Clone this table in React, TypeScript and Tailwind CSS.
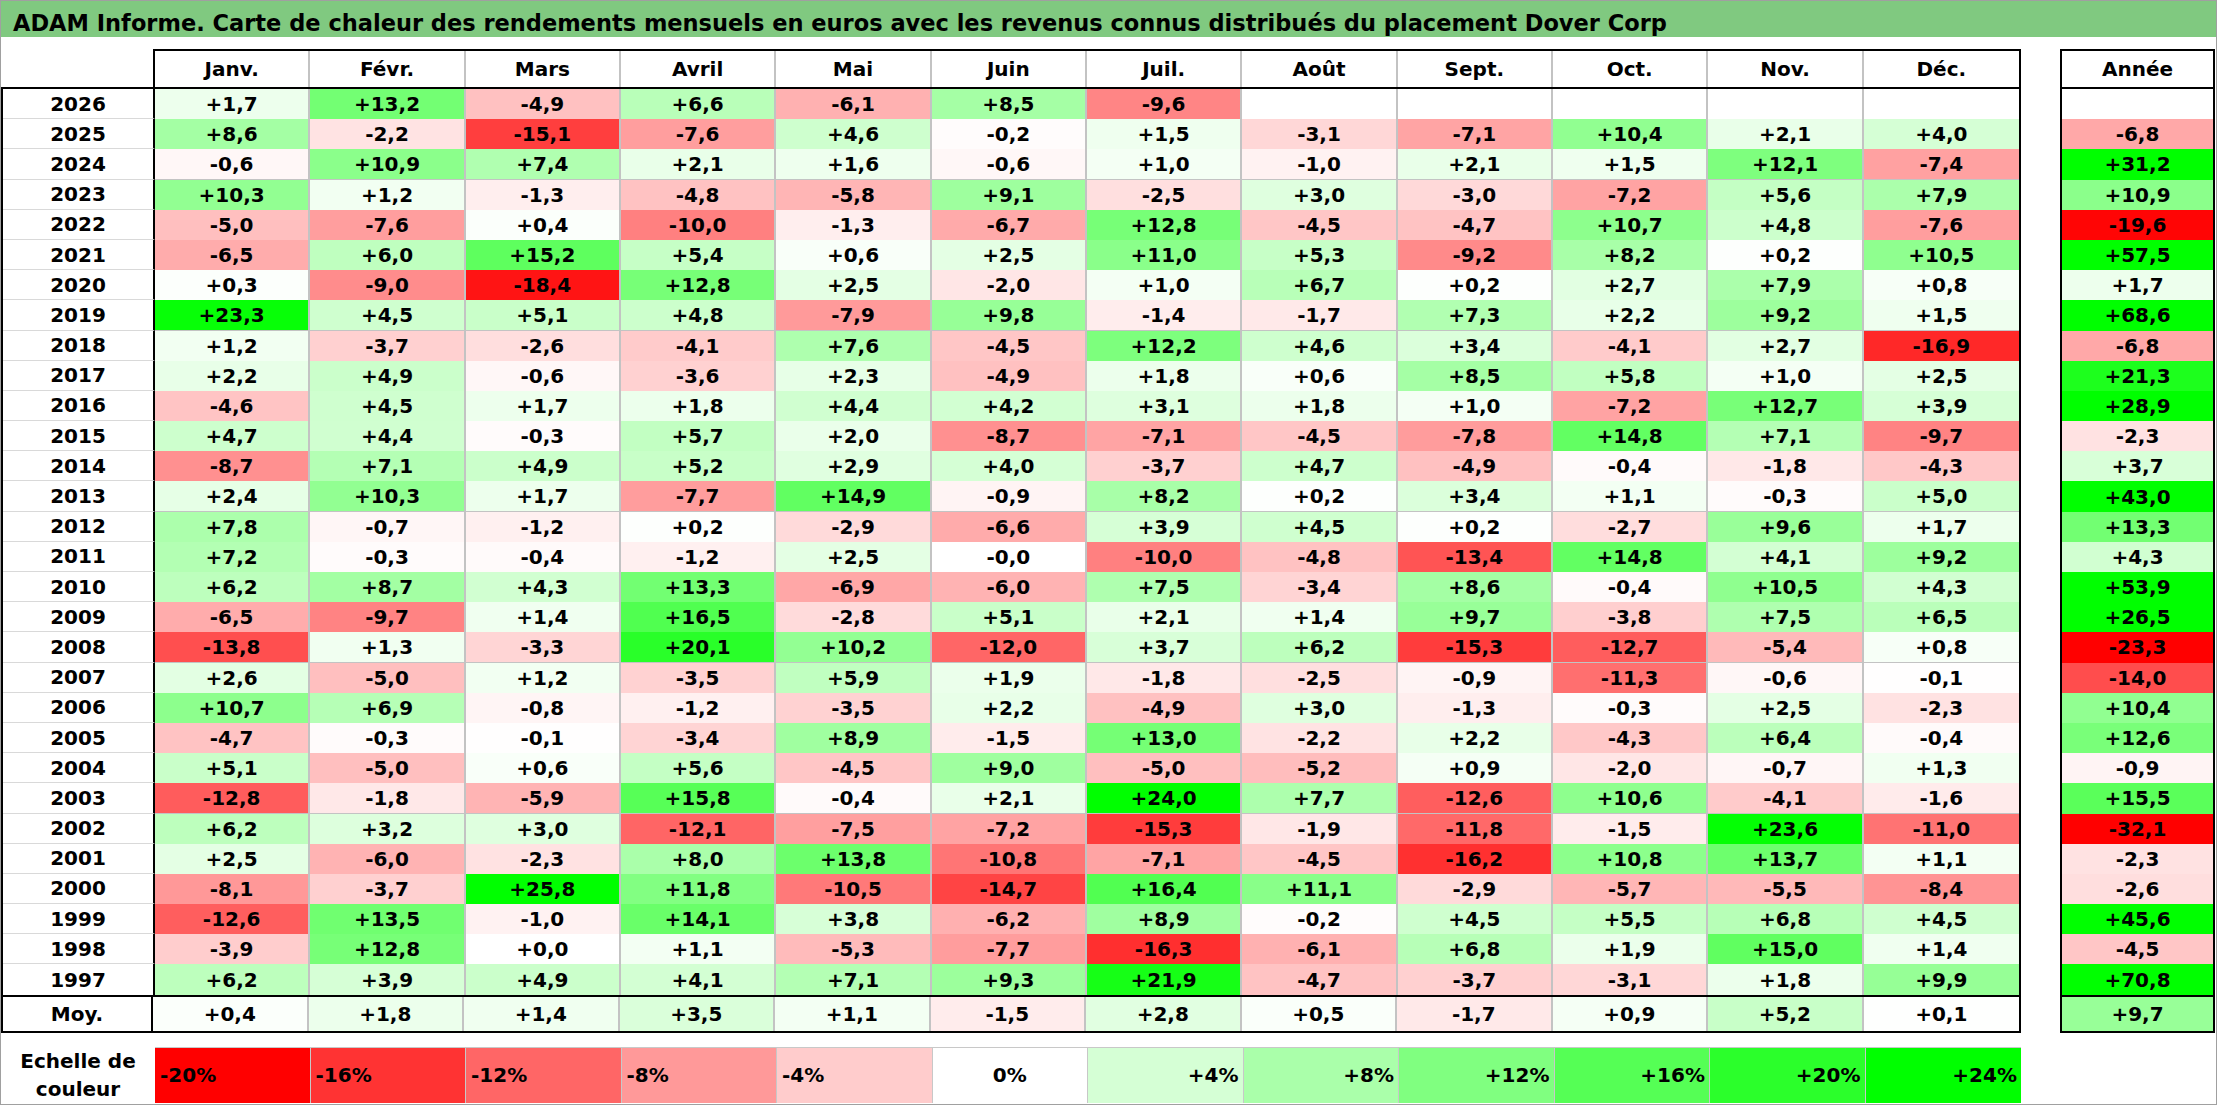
import React from "react";

const MONTHS = ["Janv.", "Févr.", "Mars", "Avril", "Mai", "Juin", "Juil.", "Août", "Sept.", "Oct.", "Nov.", "Déc."];

// year, monthly returns (Janv..Déc), yearly total
const DATA: [string, string[], string][] = [
  ["2026", ["+1,7", "+13,2", "-4,9", "+6,6", "-6,1", "+8,5", "-9,6", "", "", "", "", ""], ""],
  ["2025", ["+8,6", "-2,2", "-15,1", "-7,6", "+4,6", "-0,2", "+1,5", "-3,1", "-7,1", "+10,4", "+2,1", "+4,0"], "-6,8"],
  ["2024", ["-0,6", "+10,9", "+7,4", "+2,1", "+1,6", "-0,6", "+1,0", "-1,0", "+2,1", "+1,5", "+12,1", "-7,4"], "+31,2"],
  ["2023", ["+10,3", "+1,2", "-1,3", "-4,8", "-5,8", "+9,1", "-2,5", "+3,0", "-3,0", "-7,2", "+5,6", "+7,9"], "+10,9"],
  ["2022", ["-5,0", "-7,6", "+0,4", "-10,0", "-1,3", "-6,7", "+12,8", "-4,5", "-4,7", "+10,7", "+4,8", "-7,6"], "-19,6"],
  ["2021", ["-6,5", "+6,0", "+15,2", "+5,4", "+0,6", "+2,5", "+11,0", "+5,3", "-9,2", "+8,2", "+0,2", "+10,5"], "+57,5"],
  ["2020", ["+0,3", "-9,0", "-18,4", "+12,8", "+2,5", "-2,0", "+1,0", "+6,7", "+0,2", "+2,7", "+7,9", "+0,8"], "+1,7"],
  ["2019", ["+23,3", "+4,5", "+5,1", "+4,8", "-7,9", "+9,8", "-1,4", "-1,7", "+7,3", "+2,2", "+9,2", "+1,5"], "+68,6"],
  ["2018", ["+1,2", "-3,7", "-2,6", "-4,1", "+7,6", "-4,5", "+12,2", "+4,6", "+3,4", "-4,1", "+2,7", "-16,9"], "-6,8"],
  ["2017", ["+2,2", "+4,9", "-0,6", "-3,6", "+2,3", "-4,9", "+1,8", "+0,6", "+8,5", "+5,8", "+1,0", "+2,5"], "+21,3"],
  ["2016", ["-4,6", "+4,5", "+1,7", "+1,8", "+4,4", "+4,2", "+3,1", "+1,8", "+1,0", "-7,2", "+12,7", "+3,9"], "+28,9"],
  ["2015", ["+4,7", "+4,4", "-0,3", "+5,7", "+2,0", "-8,7", "-7,1", "-4,5", "-7,8", "+14,8", "+7,1", "-9,7"], "-2,3"],
  ["2014", ["-8,7", "+7,1", "+4,9", "+5,2", "+2,9", "+4,0", "-3,7", "+4,7", "-4,9", "-0,4", "-1,8", "-4,3"], "+3,7"],
  ["2013", ["+2,4", "+10,3", "+1,7", "-7,7", "+14,9", "-0,9", "+8,2", "+0,2", "+3,4", "+1,1", "-0,3", "+5,0"], "+43,0"],
  ["2012", ["+7,8", "-0,7", "-1,2", "+0,2", "-2,9", "-6,6", "+3,9", "+4,5", "+0,2", "-2,7", "+9,6", "+1,7"], "+13,3"],
  ["2011", ["+7,2", "-0,3", "-0,4", "-1,2", "+2,5", "-0,0", "-10,0", "-4,8", "-13,4", "+14,8", "+4,1", "+9,2"], "+4,3"],
  ["2010", ["+6,2", "+8,7", "+4,3", "+13,3", "-6,9", "-6,0", "+7,5", "-3,4", "+8,6", "-0,4", "+10,5", "+4,3"], "+53,9"],
  ["2009", ["-6,5", "-9,7", "+1,4", "+16,5", "-2,8", "+5,1", "+2,1", "+1,4", "+9,7", "-3,8", "+7,5", "+6,5"], "+26,5"],
  ["2008", ["-13,8", "+1,3", "-3,3", "+20,1", "+10,2", "-12,0", "+3,7", "+6,2", "-15,3", "-12,7", "-5,4", "+0,8"], "-23,3"],
  ["2007", ["+2,6", "-5,0", "+1,2", "-3,5", "+5,9", "+1,9", "-1,8", "-2,5", "-0,9", "-11,3", "-0,6", "-0,1"], "-14,0"],
  ["2006", ["+10,7", "+6,9", "-0,8", "-1,2", "-3,5", "+2,2", "-4,9", "+3,0", "-1,3", "-0,3", "+2,5", "-2,3"], "+10,4"],
  ["2005", ["-4,7", "-0,3", "-0,1", "-3,4", "+8,9", "-1,5", "+13,0", "-2,2", "+2,2", "-4,3", "+6,4", "-0,4"], "+12,6"],
  ["2004", ["+5,1", "-5,0", "+0,6", "+5,6", "-4,5", "+9,0", "-5,0", "-5,2", "+0,9", "-2,0", "-0,7", "+1,3"], "-0,9"],
  ["2003", ["-12,8", "-1,8", "-5,9", "+15,8", "-0,4", "+2,1", "+24,0", "+7,7", "-12,6", "+10,6", "-4,1", "-1,6"], "+15,5"],
  ["2002", ["+6,2", "+3,2", "+3,0", "-12,1", "-7,5", "-7,2", "-15,3", "-1,9", "-11,8", "-1,5", "+23,6", "-11,0"], "-32,1"],
  ["2001", ["+2,5", "-6,0", "-2,3", "+8,0", "+13,8", "-10,8", "-7,1", "-4,5", "-16,2", "+10,8", "+13,7", "+1,1"], "-2,3"],
  ["2000", ["-8,1", "-3,7", "+25,8", "+11,8", "-10,5", "-14,7", "+16,4", "+11,1", "-2,9", "-5,7", "-5,5", "-8,4"], "-2,6"],
  ["1999", ["-12,6", "+13,5", "-1,0", "+14,1", "+3,8", "-6,2", "+8,9", "-0,2", "+4,5", "+5,5", "+6,8", "+4,5"], "+45,6"],
  ["1998", ["-3,9", "+12,8", "+0,0", "+1,1", "-5,3", "-7,7", "-16,3", "-6,1", "+6,8", "+1,9", "+15,0", "+1,4"], "-4,5"],
  ["1997", ["+6,2", "+3,9", "+4,9", "+4,1", "+7,1", "+9,3", "+21,9", "-4,7", "-3,7", "-3,1", "+1,8", "+9,9"], "+70,8"],
];

const AVG = ["+0,4", "+1,8", "+1,4", "+3,5", "+1,1", "-1,5", "+2,8", "+0,5", "-1,7", "+0,9", "+5,2", "+0,1"];
const AVG_TOTAL = "+9,7";

const SCALE = [
  { label: "-20%", cls: "bg-[#ff0000] justify-start pl-[5px]" },
  { label: "-16%", cls: "bg-[#ff3333] justify-start pl-[5px]" },
  { label: "-12%", cls: "bg-[#ff6666] justify-start pl-[5px]" },
  { label: "-8%", cls: "bg-[#ff9999] justify-start pl-[5px]" },
  { label: "-4%", cls: "bg-[#ffcccc] justify-start pl-[5px]" },
  { label: "0%", cls: "bg-white justify-center" },
  { label: "+4%", cls: "bg-[#d5ffd5] justify-end pr-[4px]" },
  { label: "+8%", cls: "bg-[#aaffaa] justify-end pr-[4px]" },
  { label: "+12%", cls: "bg-[#80ff80] justify-end pr-[4px]" },
  { label: "+16%", cls: "bg-[#55ff55] justify-end pr-[4px]" },
  { label: "+20%", cls: "bg-[#2bff2b] justify-end pr-[4px]" },
  { label: "+24%", cls: "bg-[#00ff00] justify-end pr-[4px]" },
];

// red down to -20 %, green up to +24 %, white around zero
function heat(s: string): string {
  if (!s) return "#ffffff";
  const v = parseFloat(s.replace(",", "."));
  if (v < 0) {
    const c = Math.round(255 * (1 - Math.min(1, -v / 20)));
    return `rgb(255,${c},${c})`;
  }
  const c = Math.round(255 * (1 - Math.min(1, v / 24)));
  return `rgb(${c},255,${c})`;
}

export default function App() {
  return (
    <div className="w-[2217px] h-[1105px] overflow-hidden bg-white border border-[#a0a0a0] font-['DejaVu_Sans',sans-serif] font-bold text-black text-[20px]">
      {/* Title bar */}
      <div className="h-[36px] bg-[#80c980] pl-[12px] pt-[9px] text-[22.5px] leading-[26px] whitespace-nowrap">
        ADAM Informe. Carte de chaleur des rendements mensuels en euros avec les revenus connus distribués du placement Dover Corp
      </div>

      <div className="mt-[12px] flex items-start">
        {/* Months table */}
        <div className="w-[2020px] shrink-0">
          <div className="flex h-[38px]">
            <div className="w-[152px] shrink-0" />
            <div className="flex-1 grid grid-cols-12 border-t-2 border-x-2 border-black">
              {MONTHS.map((m, j) => (
                <div
                  key={m}
                  className={`flex items-center justify-center ${j < 11 ? "border-r-2 border-r-[#c3c3c3]" : ""}`}
                >
                  {m}
                </div>
              ))}
            </div>
          </div>

          <div className="border-t-2 border-x-2 border-black">
            {DATA.map(([year, vals], i) => {
              const last = i === DATA.length - 1;
              return (
                <div key={year} className="flex h-[30.2px]">
                  <div
                    className={`w-[152px] shrink-0 flex items-center justify-center border-r-2 border-r-black ${
                      last ? "" : "border-b border-b-[#d9d9d9]"
                    }`}
                  >
                    {year}
                  </div>
                  <div className="flex-1 grid grid-cols-12">
                    {vals.map((v, j) => (
                      <div
                        key={j}
                        className={`flex items-center justify-center ${j < 11 ? "border-r-2 border-r-[#c3c3c3]" : ""} ${
                          last ? "" : "border-b-2 border-b-[#c3c3c3]"
                        }`}
                        style={{ backgroundColor: heat(v) }}
                      >
                        {v}
                      </div>
                    ))}
                  </div>
                </div>
              );
            })}
          </div>

          <div className="flex h-[38px] border-2 border-black">
            <div className="w-[150px] shrink-0 flex items-center justify-center border-r-2 border-r-black">Moy.</div>
            <div className="flex-1 grid grid-cols-12">
              {AVG.map((v, j) => (
                <div
                  key={j}
                  className={`flex items-center justify-center ${j < 11 ? "border-r-2 border-r-[#c3c3c3]" : ""}`}
                  style={{ backgroundColor: heat(v) }}
                >
                  {v}
                </div>
              ))}
            </div>
          </div>
        </div>

        {/* Yearly totals */}
        <div className="ml-[39px] w-[155px] shrink-0 border-2 border-black">
          <div className="h-[38px] border-b-2 border-black flex items-center justify-center">Année</div>
          {DATA.map(([year, , total]) => (
            <div
              key={year}
              className="h-[30.2px] flex items-center justify-center"
              style={{ backgroundColor: heat(total) }}
            >
              {total}
            </div>
          ))}
          <div
            className="h-[36px] border-t-2 border-black flex items-center justify-center"
            style={{ backgroundColor: heat(AVG_TOTAL) }}
          >
            {AVG_TOTAL}
          </div>
        </div>
      </div>

      {/* Colour scale */}
      <div className="mt-[14px] flex h-[56px]">
        <div className="w-[154px] shrink-0 flex items-center justify-center text-center leading-[28px]">
          Echelle de
          <br />
          couleur
        </div>
        <div className="w-[1866px] shrink-0 grid grid-cols-12 border-t border-[#c8c8c8]">
          {SCALE.map((s, j) => (
            <div
              key={s.label}
              className={`flex items-center ${s.cls} ${j < 11 ? "border-r border-r-[#c8c8c8]" : ""}`}
            >
              {s.label}
            </div>
          ))}
        </div>
      </div>
    </div>
  );
}
